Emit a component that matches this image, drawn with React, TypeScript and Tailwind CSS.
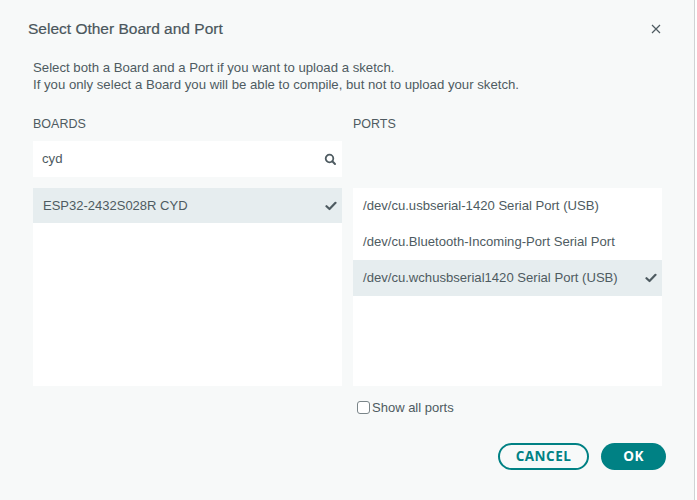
import React from "react";

const Check = () => (
  <svg width="12" height="10" viewBox="0 0 12 10" fill="none">
    <path d="M1.5 5.2 L4.5 8 L10.5 1.8" stroke="#4e5b61" strokeWidth="2.2" strokeLinecap="round" strokeLinejoin="round" />
  </svg>
);

export default function App() {
  const ports = [
    { name: "/dev/cu.usbserial-1420 Serial Port (USB)", sel: false },
    { name: "/dev/cu.Bluetooth-Incoming-Port Serial Port", sel: false },
    { name: "/dev/cu.wchusbserial1420 Serial Port (USB)", sel: true },
  ];
  return (
    <div className="w-[697px] h-[500px] bg-white flex" style={{ fontFamily: '"Liberation Sans", Arial, sans-serif' }}>
      <div className="w-[695px] h-[500px] bg-[#f7f9f9] border-r border-[#cfd3d4] flex flex-col text-[#4e5b61]">
        <div className="flex items-center justify-between pl-[28px] pr-[33px] pt-[12px] h-[45px]">
          <div className="text-[15.5px] text-[#4a565c] leading-none [-webkit-text-stroke:0.2px_#4a565c]">Select Other Board and Port</div>
          <svg width="10" height="10" viewBox="0 0 10 10">
            <path d="M1 1 L9 9 M9 1 L1 9" stroke="#4e5b61" strokeWidth="1.2" />
          </svg>
        </div>
        <div className="pl-[33px] pt-[14px] text-[13.2px] leading-[17px]">
          <div>Select both a Board and a Port if you want to upload a sketch.</div>
          <div>If you only select a Board you will be able to compile, but not to upload your sketch.</div>
        </div>
        <div className="flex pl-[33px] pt-[23px] gap-[11px]">
          <div className="w-[309px] flex flex-col">
            <div className="text-[12.5px] leading-[16px] h-[18px]">BOARDS</div>
            <div className="mt-[7px] h-[36px] bg-white flex items-center justify-between pl-[9px] pr-[4px]">
              <span className="text-[13.2px]">cyd</span>
              <svg width="13" height="13" viewBox="0 0 13 13" className="mr-[1px]">
                <circle cx="5.5" cy="5.5" r="3.8" stroke="#4e5b61" strokeWidth="1.8" fill="none" />
                <path d="M8.3 8.3 L11 11" stroke="#4e5b61" strokeWidth="2" strokeLinecap="round" />
              </svg>
            </div>
            <div className="mt-[11px] h-[198px] bg-white">
              <div className="h-[35px] bg-[#e6edef] flex items-center justify-between pl-[10px] pr-[5px] text-[13px]">
                <span>ESP32-2432S028R CYD</span>
                <Check />
              </div>
            </div>
          </div>
          <div className="w-[309px] flex flex-col">
            <div className="text-[12.5px] leading-[16px] h-[18px]">PORTS</div>
            <div className="mt-[54px] h-[198px] bg-white flex flex-col">
              {ports.map((p) => (
                <div
                  key={p.name}
                  className={`h-[36px] flex items-center justify-between pl-[10px] pr-[5px] text-[13.1px] ${p.sel ? "bg-[#e6edef]" : ""}`}
                >
                  <span>{p.name}</span>
                  {p.sel ? <Check /> : null}
                </div>
              ))}
            </div>
            <label className="mt-[12px] flex items-center text-[13px] pl-[4px]">
              <span className="w-[13px] h-[13px] border border-[#7a8589] rounded-[3px] bg-white mr-[2px]" />
              <span>Show all ports</span>
            </label>
          </div>
        </div>
        <div className="flex justify-end pr-[28px] mt-[25px] gap-[12px]" style={{ fontFamily: '"Open Sans", sans-serif' }}>
          <button className="w-[91px] h-[27px] rounded-full border-2 border-[#008184] text-[#008184] font-bold text-[13.5px] tracking-[0.5px] flex items-center justify-center">
            CANCEL
          </button>
          <button className="w-[65px] h-[27px] rounded-full bg-[#008184] text-white font-bold text-[13.5px] tracking-[0.5px] flex items-center justify-center">
            OK
          </button>
        </div>
      </div>
    </div>
  );
}
